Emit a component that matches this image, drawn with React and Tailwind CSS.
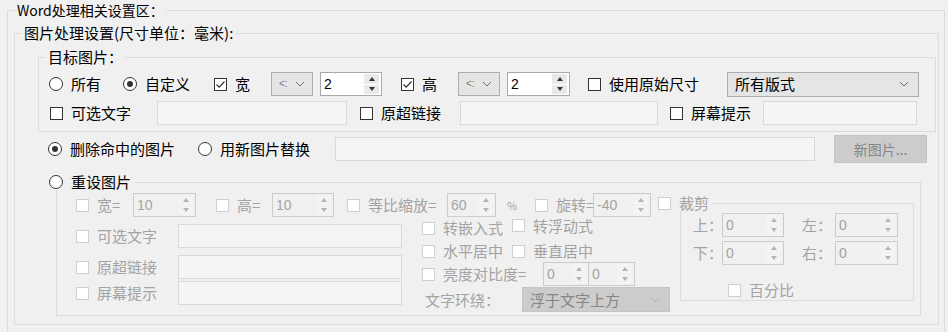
import React from 'react';

function Radio({ label, checked, className = '' }) {
  return (
    <div className={`flex items-center shrink-0 ${className}`}>
      <span className="w-[14px] h-[14px] rounded-full border border-[#333333] bg-white flex items-center justify-center shrink-0">
        {checked && <span className="w-[6px] h-[6px] rounded-full bg-[#333333]" />}
      </span>
      <span className="ml-[8px] whitespace-nowrap leading-[16px]">{label}</span>
    </div>
  );
}

function Check({ label, checked, disabled, className = '' }) {
  return (
    <div className={`flex items-center shrink-0 ${className}`}>
      <span
        className={`w-[13px] h-[13px] border bg-white flex items-center justify-center shrink-0 ${
          disabled ? 'border-[#cfcfcf]' : 'border-[#333333]'
        }`}
      >
        {checked && (
          <svg width="11" height="11" viewBox="0 0 11 11">
            <polyline points="1.5,5.5 4.2,8.2 9.5,2.5" fill="none" stroke="#333333" strokeWidth="1.2" />
          </svg>
        )}
      </span>
      <span className={`ml-[8px] whitespace-nowrap leading-[16px] ${disabled ? 'text-[#a3a3a3]' : 'text-black'}`}>
        {label}
      </span>
    </div>
  );
}

function Spin({ value, disabled, className = '' }) {
  const tri = disabled ? '#b4b4b4' : '#333333';
  return (
    <div
      className={`flex h-[24px] border shrink-0 ${
        disabled ? 'border-[#cccccc] text-[#a3a3a3]' : 'border-[#a9a9a9] bg-white text-black'
      } ${className}`}
    >
      <span className="flex-1 pl-[3px] text-[14px] leading-[22px] font-['Liberation_Sans','Noto_Sans',sans-serif]">{value}</span>
      <div className="w-[15px] my-[1px] mr-[2px] flex flex-col gap-[1px]">
        <div className={`flex-1 flex items-center justify-center ${disabled ? 'bg-[#f3f3f3]' : 'bg-[#e9e9e9]'}`}>
          <svg width="6" height="4" viewBox="0 0 6 4">
            <polygon points="0,4 3,0 6,4" fill={tri} />
          </svg>
        </div>
        <div className={`flex-1 flex items-center justify-center ${disabled ? 'bg-[#f3f3f3]' : 'bg-[#e9e9e9]'}`}>
          <svg width="6" height="4" viewBox="0 0 6 4">
            <polygon points="0,0 6,0 3,4" fill={tri} />
          </svg>
        </div>
      </div>
    </div>
  );
}

function TextBox({ className = '' }) {
  return <div className={`h-[24px] border border-[#d9d9d9] bg-[#f5f5f5] shrink-0 ${className}`} />;
}

function Chevron({ color }) {
  return (
    <svg width="10" height="6" viewBox="0 0 10 6" className="shrink-0">
      <path d="M1 1 L5 5 L9 1" fill="none" stroke={color} strokeWidth="1" />
    </svg>
  );
}

function Select({ label, disabled, className = '' }) {
  return (
    <div
      className={`flex items-center h-[25px] border pl-[7px] pr-[9px] shrink-0 ${
        disabled ? 'bg-[#cccccc] border-[#c4c4c4] text-[#858585]' : 'bg-[#e5e5e5] border-[#adadad] text-black'
      } ${className}`}
    >
      <span className="flex-1 whitespace-nowrap leading-[16px]">{label}</span>
      <Chevron color={disabled ? '#b3b3b3' : '#707070'} />
    </div>
  );
}

function MiniSelect() {
  return (
    <div className="flex items-center h-[24px] w-[42px] border border-[#adadad] bg-[#e5e5e5] pl-[7px] pr-[7px] shrink-0">
      <span className="flex-1 text-[10px] leading-[10px] text-[#777777] font-['Liberation_Sans',sans-serif]">&lt;:</span>
      <Chevron color="#707070" />
    </div>
  );
}

function Group({ title, className = '', legendClass = '', children }) {
  return (
    <fieldset className={`border border-[#dcdcdc] shrink-0 ${className}`}>
      <legend className={`h-[16px] leading-[16px] px-[2px] ${legendClass}`}>{title}</legend>
      {children}
    </fieldset>
  );
}

export default function App() {
  return (
    <div className="w-[948px] h-[332px] overflow-hidden bg-[#f0f0f0] pl-[7px] pt-[2px] text-[15px] text-black font-['Noto_Sans_CJK_SC','Noto_Sans',sans-serif]">
      <Group title="Word处理相关设置区：" className="w-[938px] h-[340px]" legendClass="ml-[7px] text-[14px]">
        <Group title="图片处理设置(尺寸单位：毫米):" className="ml-[6px] mt-[7px] w-[925px] h-[300px]" legendClass="ml-[7px]">
          {/* 目标图片 */}
          <Group title="目标图片：" className="ml-[23px] mt-[8px] w-[898px] h-[83px]" legendClass="ml-[7px]">
            <div className="flex items-center h-[24px] mt-[7px]">
              <Radio label="所有" className="ml-[10px] w-[74px]" />
              <Radio label="自定义" checked className="w-[91px]" />
              <Check label="宽" checked className="w-[57px]" />
              <MiniSelect />
              <Spin value="2" className="ml-[7px] w-[62px]" />
              <Check label="高" checked className="ml-[19px] w-[57px]" />
              <MiniSelect />
              <Spin value="2" className="ml-[7px] w-[63px]" />
              <Check label="使用原始尺寸" className="ml-[18px] w-[139px]" />
              <Select label="所有版式" className="w-[192px]" />
            </div>
            <div className="flex items-center h-[24px] mt-[5px]">
              <Check label="可选文字" className="ml-[11px] w-[107px]" />
              <TextBox className="w-[190px]" />
              <Check label="原超链接" className="ml-[13px] w-[100px]" />
              <TextBox className="w-[198px]" />
              <Check label="屏幕提示" className="ml-[12px] w-[93px]" />
              <TextBox className="w-[154px]" />
            </div>
          </Group>

          <div className="flex items-center h-[28px] mt-[3px]">
            <Radio label="删除命中的图片" checked className="ml-[33px] w-[150px]" />
            <Radio label="用新图片替换" className="w-[137px]" />
            <TextBox className="w-[480px]" />
            <button className="ml-[19px] w-[93px] h-[28px] bg-[#cccccc] border border-[#c4c4c4] text-[#858585] text-[14px] leading-[16px]">
              新图片...
            </button>
          </div>

          {/* 重设图片 */}
          <Group
            title={<Radio label="重设图片" />}
            className="ml-[41px] mt-[11px] w-[865px] h-[142px]"
            legendClass="-ml-[8px] pl-0 pr-[4px]"
          >
            <div className="flex items-start">
              <div className="w-[623px] shrink-0">
                <div className="flex items-center h-[24px] mt-[3px]">
                  <Check disabled label="宽=" className="ml-[19px] w-[57px]" />
                  <Spin disabled value="10" className="w-[63px]" />
                  <Check disabled label="高=" className="ml-[20px] w-[56px]" />
                  <Spin disabled value="10" className="w-[62px]" />
                  <Check disabled label="等比缩放=" className="ml-[13px] w-[100px]" />
                  <Spin disabled value="60" className="w-[49px]" />
                  <span className="ml-[11px] w-[28px] text-[11px] text-[#a3a3a3] shrink-0">%</span>
                  <Check disabled label="旋转=" className="w-[58px]" />
                  <Spin disabled value="-40" className="w-[58px]" />
                </div>
                <div className="flex">
                  <div className="w-[345px] shrink-0">
                    <div className="flex items-center h-[24px] mt-[7px]">
                      <Check disabled label="可选文字" className="ml-[19px] w-[102px]" />
                      <TextBox className="w-[224px]" />
                    </div>
                    <div className="flex items-center h-[24px] mt-[7px]">
                      <Check disabled label="原超链接" className="ml-[19px] w-[102px]" />
                      <TextBox className="w-[224px]" />
                    </div>
                    <div className="flex items-center h-[24px] mt-[2px]">
                      <Check disabled label="屏幕提示" className="ml-[19px] w-[102px]" />
                      <TextBox className="w-[224px]" />
                    </div>
                  </div>
                  <div className="ml-[18px] flex-1">
                    <div className="flex items-center h-[18px] mt-[2px]">
                      <Check disabled label="转嵌入式" className="ml-[2px] w-[90px]" />
                      <Check disabled label="转浮动式" className="-mt-[5px]" />
                    </div>
                    <div className="flex items-center h-[18px] mt-[5px]">
                      <Check disabled label="水平居中" className="ml-[2px] w-[90px]" />
                      <Check disabled label="垂直居中" />
                    </div>
                    <div className="flex items-center h-[24px] mt-[2px]">
                      <Check disabled label="亮度对比度=" className="ml-[2px] w-[121px]" />
                      <Spin disabled value="0" className="w-[46px]" />
                      <Spin disabled value="0" className="-ml-[1px] w-[47px]" />
                    </div>
                    <div className="flex items-center h-[25px] mt-[1px]">
                      <span className="ml-[5px] w-[97px] text-[#a3a3a3] leading-[16px] shrink-0">文字环绕：</span>
                      <Select disabled label="浮于文字上方" className="w-[148px]" />
                    </div>
                  </div>
                </div>
              </div>

              {/* 裁剪 */}
              <Group
                title={<Check disabled label="裁剪" />}
                className="mt-[5px] w-[234px] h-[106px]"
                legendClass="-ml-[23px] pl-0 pr-[3px]"
              >
                <div className="flex items-center h-[24px] mt-[2px] text-[#a3a3a3]">
                  <span className="ml-[12px] w-[29px] shrink-0">上：</span>
                  <Spin disabled value="0" className="w-[62px]" />
                  <span className="ml-[18px] w-[33px] shrink-0">左：</span>
                  <Spin disabled value="0" className="w-[63px]" />
                </div>
                <div className="flex items-center h-[24px] mt-[4px] text-[#a3a3a3]">
                  <span className="ml-[12px] w-[29px] shrink-0">下：</span>
                  <Spin disabled value="0" className="w-[62px]" />
                  <span className="ml-[18px] w-[33px] shrink-0">右：</span>
                  <Spin disabled value="0" className="w-[63px]" />
                </div>
                <div className="flex items-center h-[16px] mt-[17px]">
                  <Check disabled label="百分比" className="ml-[47px]" />
                </div>
              </Group>
            </div>
          </Group>
        </Group>
      </Group>
    </div>
  );
}
